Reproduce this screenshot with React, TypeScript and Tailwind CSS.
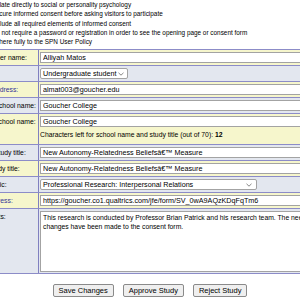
import React from 'react';

const rules = [
  'Relate directly to social or personality psychology',
  'Secure informed consent before asking visitors to participate',
  'Include all required elements of informed consent',
  'Do not require a password or registration in order to see the opening page or consent form',
  'Adhere fully to the SPN User Policy',
];

function Chevron() {
  return (
    <svg width="6" height="4" viewBox="0 0 6 4" className="shrink-0">
      <polyline points="0.5,0.8 3,3.2 5.5,0.8" fill="none" stroke="#555" strokeWidth="0.7" />
    </svg>
  );
}

function Row({
  label,
  tone,
  height = 'h-[16px]',
  labelColor = 'text-black',
  children,
}: {
  label: string;
  tone: 'y' | 'b';
  height?: string;
  labelColor?: string;
  children?: React.ReactNode;
}) {
  return (
    <div
      className={`flex border-b border-[#8c8cc8] ${height} ${tone === 'y' ? 'bg-[#f6f6cc]' : 'bg-[#e3e7ef]'}`}
    >
      <div
        className={`w-[71px] shrink-0 overflow-hidden border-r border-[#8080c0] pl-[3px] pt-[3px] text-[6.8px] leading-[9px] whitespace-nowrap ${labelColor}`}
      >
        {label}
      </div>
      <div className="flex-1 pl-[1px] pt-[2px]">{children}</div>
    </div>
  );
}

const inputCls =
  'block h-[11px] w-[640px] border border-[#a3a3a3] bg-white px-[2px] text-[7.2px] leading-none outline-none';

const btnCls =
  'h-[13px] rounded-[2px] border border-[#8a8a8a] bg-[#efefef] px-[5px] text-[7.5px] leading-none';

export default function App() {
  return (
    <div className="w-[300px] h-[300px] overflow-hidden bg-white text-black [font-family:'Liberation_Sans',Arial,sans-serif]">
      <ul className="ml-[-8.5px] text-[6.4px] leading-[9.25px] whitespace-nowrap">
        {rules.map((r) => (
          <li key={r}>{r}</li>
        ))}
      </ul>

      <form className="mt-[3px]">
        <div className="ml-[-32px] w-[720px] border-t border-[#8c8cc8]">
          <Row label="Researcher name:" tone="y">
            <input className={inputCls} defaultValue="Alliyah Matos" readOnly />
          </Row>
          <Row label="Status:" tone="b">
            <div className="flex h-[11px] w-[88px] items-center justify-between rounded-[2px] border border-[#a3a3a3] bg-white pl-[2px] pr-[3px] text-[7.2px] leading-none">
              <span>Undergraduate student</span>
              <Chevron />
            </div>
          </Row>
          <Row label="E-mail address:" tone="y" labelColor="text-[#333399]">
            <input className={inputCls} defaultValue="almat003@goucher.edu" readOnly />
          </Row>
          <Row label="Current school name:" tone="b">
            <input className={inputCls} defaultValue="Goucher College" readOnly />
          </Row>
          <Row label="Display school name:" tone="y" height="h-[31px]">
            <input className={inputCls} defaultValue="Goucher College" readOnly />
            <div className="mt-[3px] text-[6.8px] leading-[9px] whitespace-nowrap">
              Characters left for school name and study title (out of 70): <b>12</b>
            </div>
          </Row>
          <Row label="Display study title:" tone="b">
            <input className={inputCls} defaultValue="New Autonomy-Relatedness Beliefsâ€™ Measure" readOnly />
          </Row>
          <Row label="Short study title:" tone="y">
            <input className={inputCls} defaultValue="New Autonomy-Relatedness Beliefsâ€™ Measure" readOnly />
          </Row>
          <Row label="Study topic:" tone="b">
            <div className="flex h-[11px] w-[217px] items-center justify-between rounded-[2px] border border-[#a3a3a3] bg-white pl-[2px] pr-[4px] text-[7.2px] leading-none">
              <span>Professional Research: Interpersonal Relations</span>
              <Chevron />
            </div>
          </Row>
          <Row label="Web address:" tone="y" labelColor="text-[#333399]">
            <input
              className={inputCls}
              defaultValue="https://goucher.co1.qualtrics.com/jfe/form/SV_0wA9AQzKDqFqTm6"
              readOnly
            />
          </Row>
          <Row label="Comments:" tone="b" height="h-[65px]">
            <textarea
              wrap="off"
              readOnly
              className="block h-[61px] w-[640px] resize-none overflow-hidden border border-[#a3a3a3] bg-white px-[2px] py-[1px] text-[6.8px] leading-[9px] outline-none"
              defaultValue={
                'This research is conducted by Professor Brian Patrick and his research team. The needed revisions were made and no\nchanges have been made to the consent form.'
              }
            />
          </Row>
        </div>

        <div className="mt-[10px] flex justify-center gap-[9px]">
          <button type="button" className={btnCls}>
            Save Changes
          </button>
          <button type="button" className={btnCls}>
            Approve Study
          </button>
          <button type="button" className={btnCls}>
            Reject Study
          </button>
        </div>
      </form>
    </div>
  );
}
